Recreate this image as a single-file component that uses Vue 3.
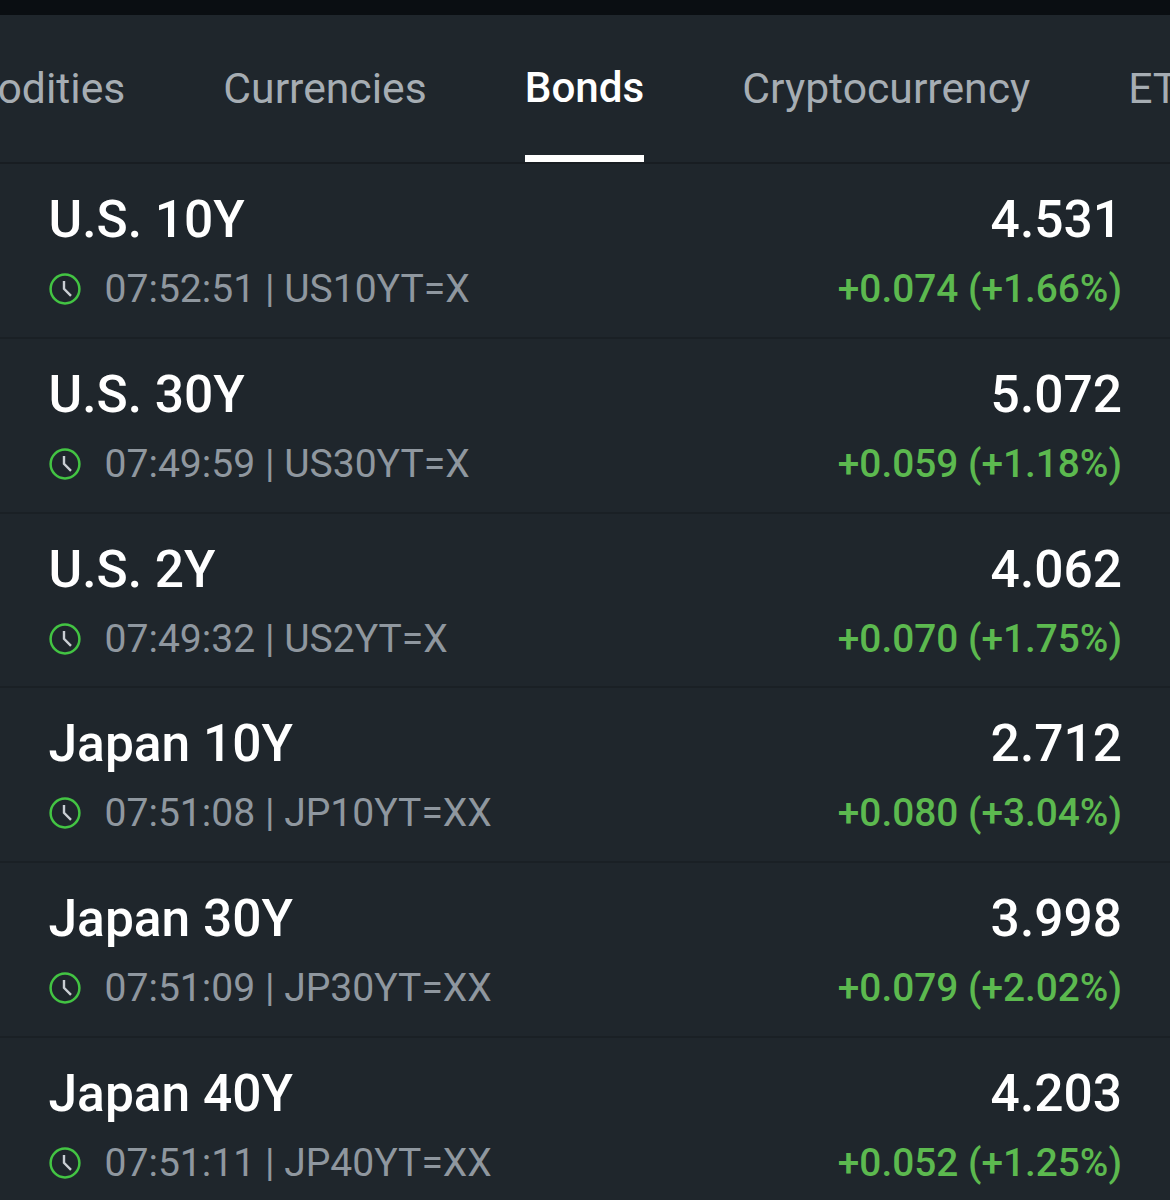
<template>
  <div class="screen">
    <div class="status-strip"></div>
    <nav class="tabs">
      <div class="tabs-track">
        <a
          v-for="tab in tabs"
          :key="tab"
          class="tab"
          :class="{ active: tab === activeTab }"
        >{{ tab }}</a>
      </div>
    </nav>
    <ul class="quotes">
      <li v-for="quote in quotes" :key="quote.symbol" class="quote">
        <div class="quote-top">
          <span class="name">{{ quote.name }}</span>
          <span class="price">{{ quote.price }}</span>
        </div>
        <div class="quote-bottom">
          <span class="meta">
            <svg class="clock" viewBox="0 0 32 32" width="32" height="32" fill="none">
              <circle cx="16" cy="16" r="14.4" stroke="#43c443" stroke-width="2.5" />
              <path d="M15 8V15.8L22 22.8" stroke="#c9ced3" stroke-width="2.4" />
            </svg>
            <span class="meta-text">{{ quote.time }} | {{ quote.symbol }}</span>
          </span>
          <span class="change">{{ quote.change }}</span>
        </div>
      </li>
    </ul>
  </div>
</template>

<script setup>
const tabs = ['Commodities', 'Currencies', 'Bonds', 'Cryptocurrency', 'ETFs']
const activeTab = 'Bonds'

const quotes = [
  { name: 'U.S. 10Y', price: '4.531', time: '07:52:51', symbol: 'US10YT=X', change: '+0.074 (+1.66%)' },
  { name: 'U.S. 30Y', price: '5.072', time: '07:49:59', symbol: 'US30YT=X', change: '+0.059 (+1.18%)' },
  { name: 'U.S. 2Y', price: '4.062', time: '07:49:32', symbol: 'US2YT=X', change: '+0.070 (+1.75%)' },
  { name: 'Japan 10Y', price: '2.712', time: '07:51:08', symbol: 'JP10YT=XX', change: '+0.080 (+3.04%)' },
  { name: 'Japan 30Y', price: '3.998', time: '07:51:09', symbol: 'JP30YT=XX', change: '+0.079 (+2.02%)' },
  { name: 'Japan 40Y', price: '4.203', time: '07:51:11', symbol: 'JP40YT=XX', change: '+0.052 (+1.25%)' }
]
</script>

<style>
html,
body {
  margin: 0;
  background: #1f262c;
}
</style>

<style scoped>
.screen {
  width: 1170px;
  height: 1200px;
  overflow: hidden;
  background: #1f262c;
  font-family: Roboto, "Liberation Sans", sans-serif;
}

.status-strip {
  height: 15px;
  background: #0a0e12;
}

.tabs {
  height: 147px;
  overflow: hidden;
  border-bottom: 2px solid #181d22;
}

/* strip is scrolled sideways, first and last tab run off the edges */
.tabs-track {
  display: flex;
  width: 1500px;
  height: 100%;
  margin-left: -129.5px;
  gap: 98px;
}

.tab {
  position: relative;
  flex-shrink: 0;
  padding-top: 49px;
  font-size: 42.7px;
  line-height: 48px;
  color: #a6adb3;
  white-space: nowrap;
}

.tab.active {
  font-size: 42.2px;
  font-weight: 500;
  color: #ffffff;
}

.tab.active::after {
  content: "";
  position: absolute;
  left: 0;
  right: 0;
  bottom: 0;
  height: 7px;
  background: #ffffff;
}

.quotes {
  margin: 0;
  padding: 0;
  list-style: none;
}

.quote {
  box-sizing: border-box;
  height: 174.8px;
  padding: 28px 48px 0 48.5px;
  border-bottom: 2px solid #1a2025;
}

.quote-top,
.quote-bottom {
  display: flex;
  justify-content: space-between;
  align-items: center;
}

.quote-top {
  height: 56px;
}

.quote-bottom {
  height: 44px;
  margin-top: 19px;
}

.name,
.price {
  font-size: 51.5px;
  font-weight: 500;
  line-height: 56px;
  color: #ffffff;
}

.meta {
  display: flex;
  align-items: center;
  gap: 24px;
}

.clock {
  flex-shrink: 0;
}

.meta-text {
  font-size: 39.1px;
  line-height: 44px;
  color: #8f979f;
}

.change {
  font-size: 38.8px;
  font-weight: 500;
  line-height: 44px;
  color: #5cb94f;
}
</style>
